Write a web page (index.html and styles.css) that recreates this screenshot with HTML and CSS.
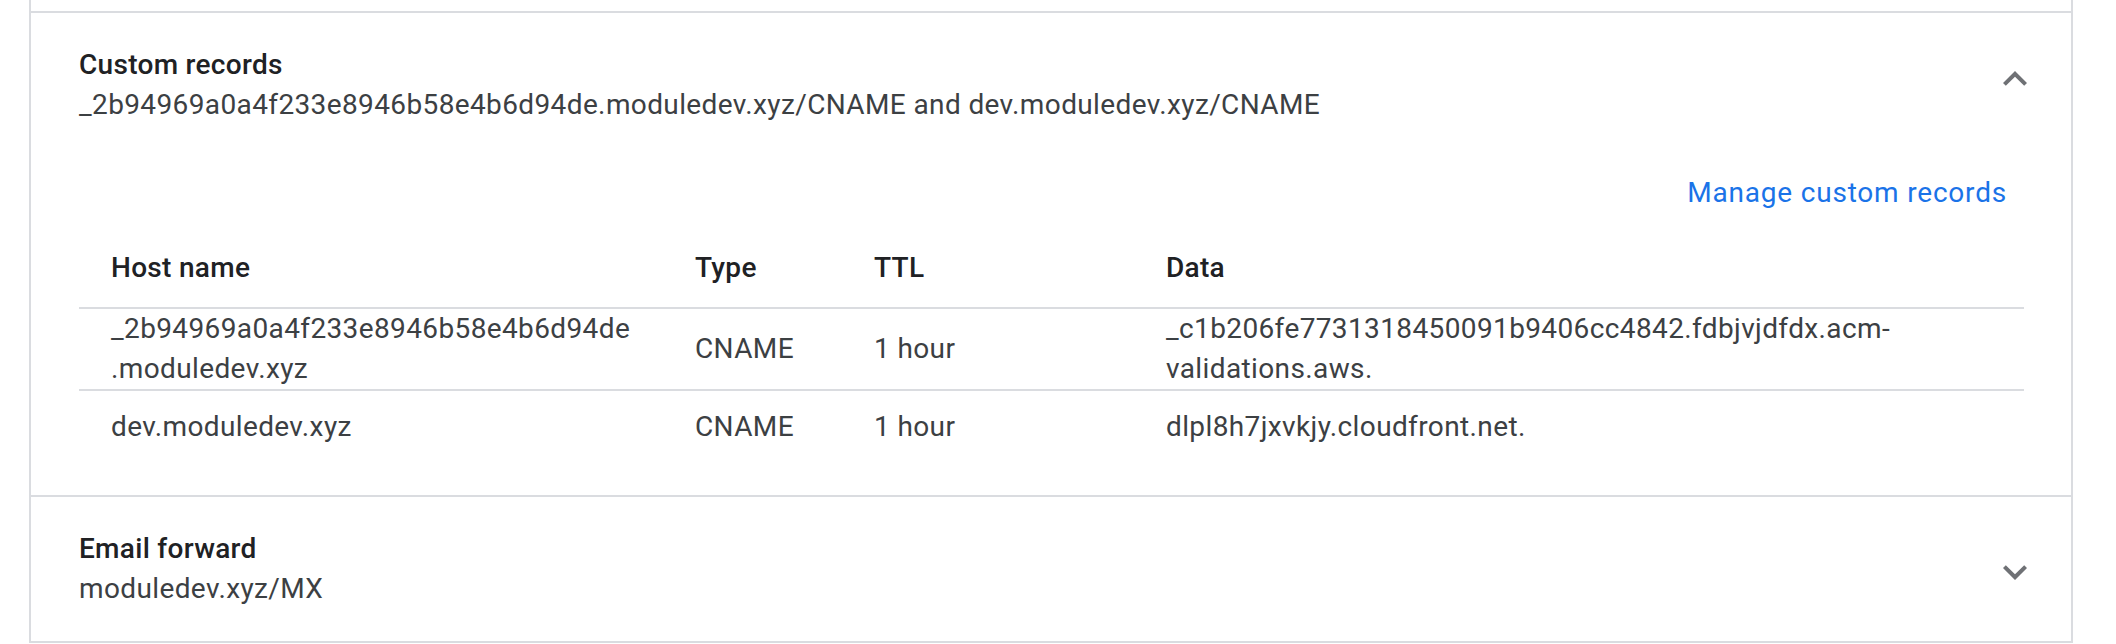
FILE: index.html
```html
<!DOCTYPE html>
<html lang="en">
<head>
<meta charset="utf-8">
<title>DNS records</title>
<link rel="stylesheet" href="styles.css">
</head>
<body>
<div class="card">
  <div class="section section-prev"></div>

  <section class="section">
    <div class="sec-head">
      <div class="sec-text">
        <div class="sec-title">Custom records</div>
        <div class="sec-sub">_2b94969a0a4f233e8946b58e4b6d94de.moduledev.xyz/CNAME and dev.moduledev.xyz/CNAME</div>
      </div>
      <svg class="chev chev-up" viewBox="0 0 24 24" width="48" height="48" aria-hidden="true"><path d="M12 8l-6 6 1.41 1.41L12 10.83l4.59 4.58L18 14z"/></svg>
    </div>
    <div class="actions"><a class="link" href="#">Manage custom records</a></div>
    <table class="records">
      <colgroup>
        <col class="c-host"><col class="c-type"><col class="c-ttl"><col class="c-data">
      </colgroup>
      <thead>
        <tr><th>Host name</th><th>Type</th><th>TTL</th><th>Data</th></tr>
      </thead>
      <tbody>
        <tr>
          <td>_2b94969a0a4f233e8946b58e4b6d94de<wbr>.moduledev.xyz</td>
          <td>CNAME</td>
          <td>1 hour</td>
          <td>_c1b206fe7731318450091b9406cc4842.fdbjvjdfdx.acm-validations.aws.</td>
        </tr>
        <tr>
          <td>dev.moduledev.xyz</td>
          <td>CNAME</td>
          <td>1 hour</td>
          <td>dlpl8h7jxvkjy.cloudfront.net.</td>
        </tr>
      </tbody>
    </table>
  </section>

  <section class="section">
    <div class="sec-head">
      <div class="sec-text">
        <div class="sec-title">Email forward</div>
        <div class="sec-sub">moduledev.xyz/MX</div>
      </div>
      <svg class="chev chev-down" viewBox="0 0 24 24" width="48" height="48" aria-hidden="true"><path d="M16.59 8.59L12 13.17 7.41 8.59 6 10l6 6 6-6z"/></svg>
    </div>
  </section>
</div>
</body>
</html>
```

FILE: styles.css
```css
* { box-sizing: border-box; }

html, body {
  margin: 0;
  padding: 0;
  background: #ffffff;
}

body {
  font-family: Roboto, "Liberation Sans", Arial, sans-serif;
  font-size: 28px;
  line-height: 40px;
  color: #3c4043;
  letter-spacing: 0.38px;
}

.card {
  margin-left: 29px;
  width: 2044px;
  border-left: 2px solid #dadce0;
  border-right: 2px solid #dadce0;
}

.section {
  border-bottom: 2px solid #dadce0;
  padding: 32px 32px 32px 48px;
}

.section-prev {
  height: 13px;
  padding: 0;
}

.sec-head {
  display: flex;
  align-items: flex-start;
  justify-content: space-between;
}

.sec-title {
  font-weight: 500;
  color: #202124;
  letter-spacing: 0.3px;
}

.sec-sub {
  color: #3c4043;
}

.chev {
  flex: none;
  fill: #6f7175;
}

.chev-up { margin-top: 10px; }
.chev-down { margin-top: 19px; }

.actions {
  display: flex;
  justify-content: flex-end;
  padding-top: 48px;
  margin-right: 32px;
}

.link {
  color: #1a73e8;
  font-weight: 400;
  text-decoration: none;
  letter-spacing: 0.8px;
}

.records {
  width: 1945px;
  margin-top: 16px;
  border-collapse: separate;
  border-spacing: 0;
  table-layout: fixed;
}

.c-host { width: 584px; }
.c-type { width: 179px; }
.c-ttl { width: 292px; }
.c-data { width: 890px; }

.records th {
  text-align: left;
  font-weight: 500;
  color: #202124;
  padding: 19px 32px 19px;
  letter-spacing: 0.3px;
}

.records td {
  height: 74px;
  padding: 0 32px;
  border-top: 2px solid #dadce0;
  vertical-align: middle;
  color: #3c4043;
}
```
